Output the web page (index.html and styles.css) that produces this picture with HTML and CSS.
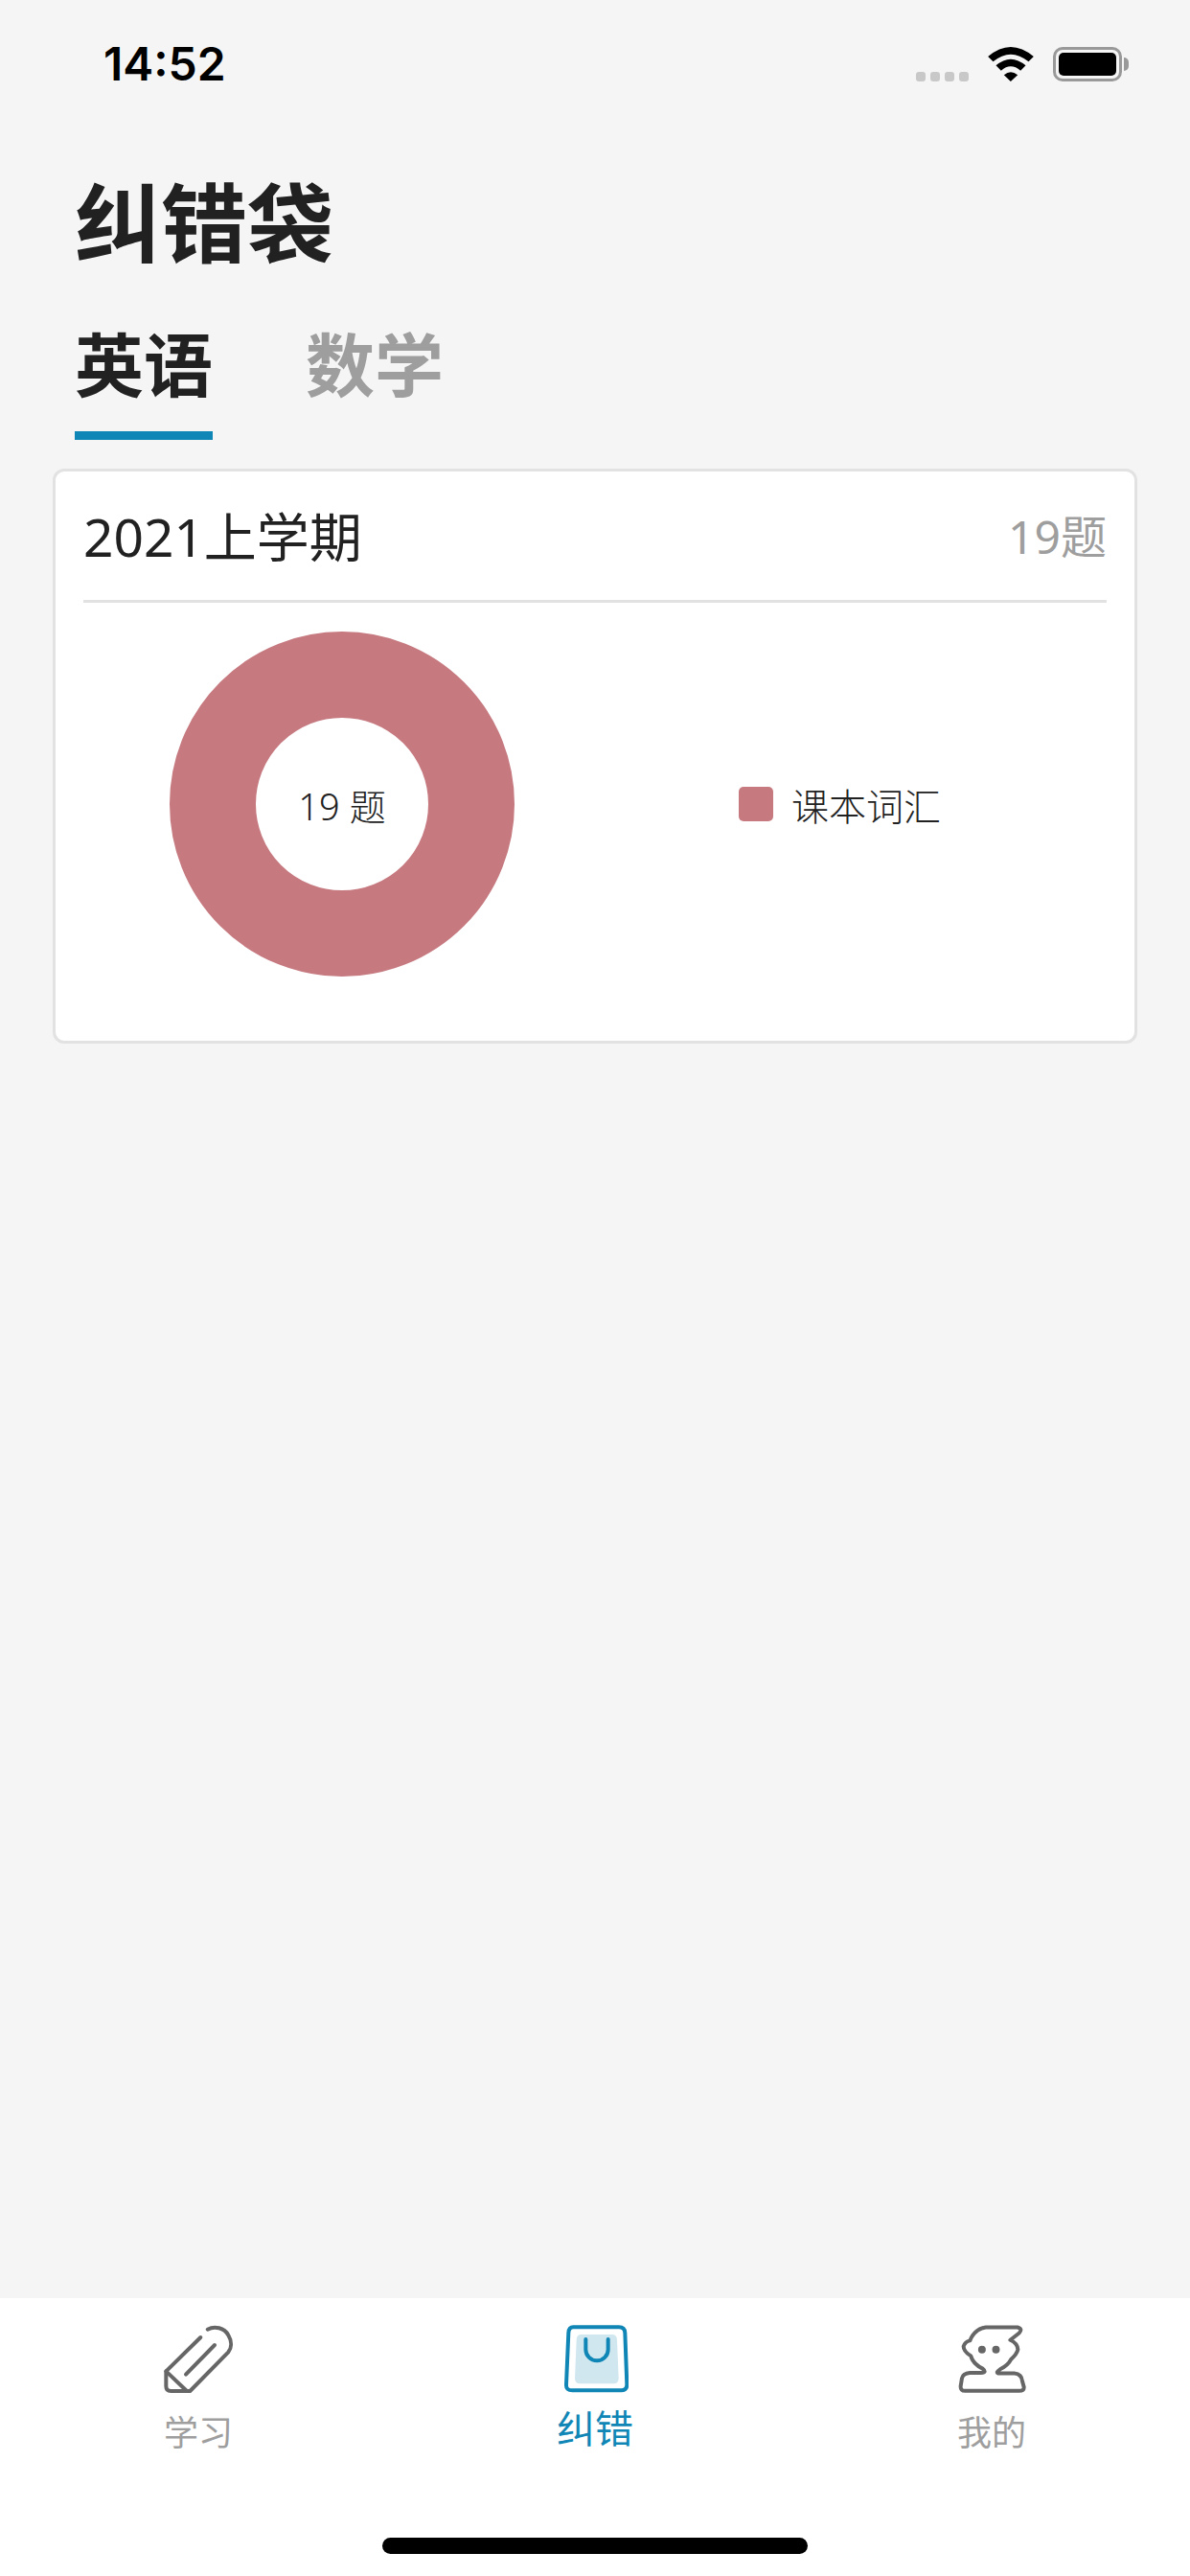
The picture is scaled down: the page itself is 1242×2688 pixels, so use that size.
FILE: index.html
```html
<!DOCTYPE html>
<html lang="zh-CN">
<head>
    <meta charset="UTF-8">
    <title>纠错袋</title>
    <link rel="stylesheet" href="styles.css">
</head>
<body>
<div class="page">
    <div class="statusBar">
        <span class="time">14:52</span>
        <div class="statusIcons">
            <div class="signal"><i></i><i></i><i></i><i></i></div>
            <svg class="wifi" viewBox="395 88 143 108" width="48" height="36">
                <path d="M395 118 Q466 58 538 118 L522 134 Q466 88 411 134 Z" fill="#000"/>
                <path d="M420 146 Q466 106 513 146 L497 162 Q466 136 436 162 Z" fill="#000"/>
                <path d="M445 176 Q466 158 488 176 L466 196 Z" fill="#000"/>
            </svg>
            <div class="battery"><div class="batteryFill"></div></div>
        </div>
    </div>

    <h1 class="pageTitle">纠错袋</h1>
    <ul class="tabs">
        <li class="tabOn">英语</li>
        <li>数学</li>
    </ul>

    <div class="main">
        <div class="card">
            <div class="cardHead">
                <span class="term">2021上学期</span>
                <span class="count">19题</span>
            </div>
            <div class="cardBody">
                <div class="donut">19 题</div>
                <div class="legend"><i class="legendDot"></i><span>课本词汇</span></div>
            </div>
        </div>
    </div>

    <div class="tabBar">
        <div class="barItem">
            <svg class="barIcon" viewBox="150 80 225 222" width="75" height="74">
                <g fill="none" stroke="#666" stroke-width="12" stroke-linecap="round" stroke-linejoin="round">
                    <path d="M290 97 C312 85 342 92 355 115 C367 135 365 155 355 168 L235 290 H175 Q160 290 160 275 V228 L268 122"/>
                    <path d="M160 228 L225 290"/>
                    <path d="M222 238 L312 146"/>
                </g>
            </svg>
            <span>学习</span>
        </div>
        <div class="barItem barOn">
            <svg class="barIcon" viewBox="138 80 210 222" width="70" height="74">
                <path d="M200 113 H296 Q312 113 312 130 L317 250 Q317 267 300 267 H197 Q180 267 180 250 L185 130 Q185 113 200 113 Z" fill="#d0e7f0"/>
                <path d="M175 90 H318 Q336 90 337 108 L343 270 Q343 288 325 288 H172 Q152 288 153 270 L160 108 Q161 90 175 90 Z" fill="none" stroke="#0f86b5" stroke-width="12"/>
                <path d="M214 128 V160 A35 35 0 0 0 284 160 V128" fill="none" stroke="#0f86b5" stroke-width="12" stroke-linecap="round"/>
            </svg>
            <span>纠错</span>
        </div>
        <div class="barItem">
            <svg class="barIcon" viewBox="175 80 220 222" width="73" height="74">
                <path d="M265 90 H365 Q382 95 370 108 L342 130 Q365 140 366 160 Q362 175 345 190 Q335 210 310 222 Q295 232 305 235 H355 Q378 237 380 260 L385 278 Q386 290 370 290 H200 Q185 290 186 275 L190 250 Q193 235 215 233 H250 Q270 232 255 220 Q225 205 218 180 Q195 165 195 150 Q200 135 215 132 Q230 95 265 90 Z" fill="none" stroke="#666" stroke-width="12" stroke-linejoin="round"/>
                <circle cx="253" cy="160" r="12" fill="#666"/>
                <circle cx="297" cy="160" r="12" fill="#666"/>
            </svg>
            <span>我的</span>
        </div>
        <div class="homeBar"></div>
    </div>
</div>
</body>
</html>
```

FILE: styles.css
```css
ul, li { margin: 0; padding: 0; list-style: none; }
body {
    margin: 0;
    background-color: #f5f5f5;
    font-family: "Noto Sans", "Noto Sans CJK SC", sans-serif;
    color: #212121;
}
.page { display: flex; flex-direction: column; width: 1242px; height: 2688px; overflow: hidden; }

/* status bar */
.statusBar {
    display: flex; justify-content: space-between; align-items: flex-start;
    height: 126px; padding: 38px 71px 0 108px;
    box-sizing: border-box;
}
.time { font-family: "Inter", sans-serif; font-weight: 600; font-size: 48px; line-height: 58px; color: #000; }
.statusIcons { display: flex; align-items: flex-end; margin-top: 11px; }
.signal { display: flex; gap: 5px; margin-right: 20px; }
.signal i { width: 10px; height: 10px; border-radius: 3px; background-color: #c8c8c8; }
.wifi { display: block; margin-right: 20px; }
.battery {
    position: relative;
    width: 72px; height: 36px; padding: 3px;
    border: 3px solid #999; border-radius: 10px;
    box-sizing: border-box;
}
.battery::after {
    content: ""; position: absolute; right: -10px; top: 8px;
    width: 5px; height: 14px; border-radius: 0 5px 5px 0; background-color: #999;
}
.batteryFill { height: 100%; border-radius: 5px; background-color: #000; }

/* title and tabs */
.pageTitle { margin: 46px 0 38px 78px; font-size: 90px; line-height: 120px; font-weight: 700; }
.tabs { display: flex; gap: 97px; margin: 0 0 30px 78px; }
.tabs li {
    height: 129px; line-height: 100px; font-size: 72px; font-weight: 700;
    box-sizing: border-box;
    color: #9e9e9e;
}
.tabs .tabOn { color: #212121; border-bottom: 9px solid #0f86b5; }

/* card */
.main { flex: 1; padding: 0 55px; }
.card {
    width: 1132px; height: 600px; padding: 0 29px;
    border: 3px solid #e2e2e2; border-radius: 12px;
    background-color: #fff;
    box-sizing: border-box;
}
.cardHead {
    display: flex; justify-content: space-between; align-items: center;
    height: 130px; padding-bottom: 4px;
    border-bottom: 3px solid #e2e2e2;
    box-sizing: content-box;
}
.term { font-size: 55px; }
.count { font-size: 48px; color: #9e9e9e; }
.cardBody { display: flex; align-items: center; padding: 30px 0 0 90px; font-weight: 300; }
.donut {
    display: flex; justify-content: center; align-items: center;
    width: 360px; height: 360px;
    border: 90px solid #c67a80; border-radius: 50%;
    box-sizing: border-box;
    font-size: 38px; color: #212121;
}
.legend { display: flex; align-items: center; gap: 19px; margin-left: 234px; font-size: 39px; }
.legendDot { width: 36px; height: 36px; border-radius: 5px; background-color: #c67a80; }

/* bottom tabs */
.tabBar {
    position: relative;
    display: grid; grid-template-columns: repeat(3, 1fr);
    height: 290px;
    background-color: #fff;
}
.barItem {
    display: flex; flex-direction: column; align-items: center;
    padding-top: 27px;
    font-size: 36px; line-height: 50px; color: #9e9e9e;
}
.barIcon { display: block; margin-bottom: 15px; }
.barOn { font-size: 40px; color: #0f86b5; }
.barOn .barIcon { margin-bottom: 10px; }
.homeBar {
    position: absolute; left: 399px; bottom: 23px;
    width: 444px; height: 17px; border-radius: 9px;
    background-color: #000;
}
```
